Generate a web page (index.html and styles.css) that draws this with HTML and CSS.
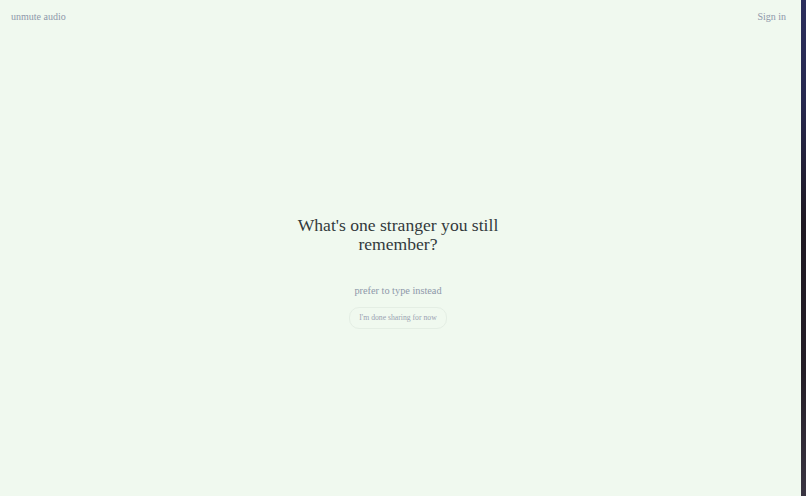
FILE: index.html
```html
<!doctype html>
<html lang="en">
<head>
	<meta charset="UTF-8">
	<title>unmute audio</title>
	<link rel="stylesheet" href="styles.css">
</head>
<body>
	<div class="page">
		<div class="top">
			<span class="brand">unmute audio</span>
			<span class="signin">Sign in</span>
		</div>
		<div class="center">
			<h1 class="question">What's one stranger you still<br>remember?</h1>
			<div class="type">prefer to type instead</div>
			<button class="done">I'm done sharing for now</button>
		</div>
	</div>
	<div class="edge"></div>
</body>
</html>
```

FILE: styles.css
```css
html,body{
	margin:0;
	padding:0;
	height:100%;
}
body{
	display:flex;
	background:#f0f9ef;
	font-family:"Liberation Serif","DejaVu Serif",serif;
}
.page{
	flex:1;
	display:flex;
	flex-direction:column;
}
.top{
	display:flex;
	justify-content:space-between;
	padding:11px 15px 0 11px;
	font-size:10px;
	color:#8e98aa;
	height:21px;
}
.center{
	flex:1;
	display:flex;
	flex-direction:column;
	align-items:center;
	padding-top:184px;
	padding-right:5px;
}
.question{
	margin:0;
	font-weight:normal;
	font-size:17.6px;
	line-height:19px;
	color:#33393c;
	text-align:center;
}
.type{
	margin-top:31px;
	font-size:10.3px;
	color:#8e98aa;
}
.done{
	margin-top:11px;
	font-family:inherit;
	font-size:7.7px;
	color:#9aa3b2;
	background:transparent;
	border:1px solid #e4eee4;
	border-radius:10px;
	padding:5px 9px 6px;
}
.edge{
	width:5px;
	background:linear-gradient(#2b2e5c 0%,#26284f 20%,#1e1822 45%,#231d26 75%,#3a3542 100%);
}
```
